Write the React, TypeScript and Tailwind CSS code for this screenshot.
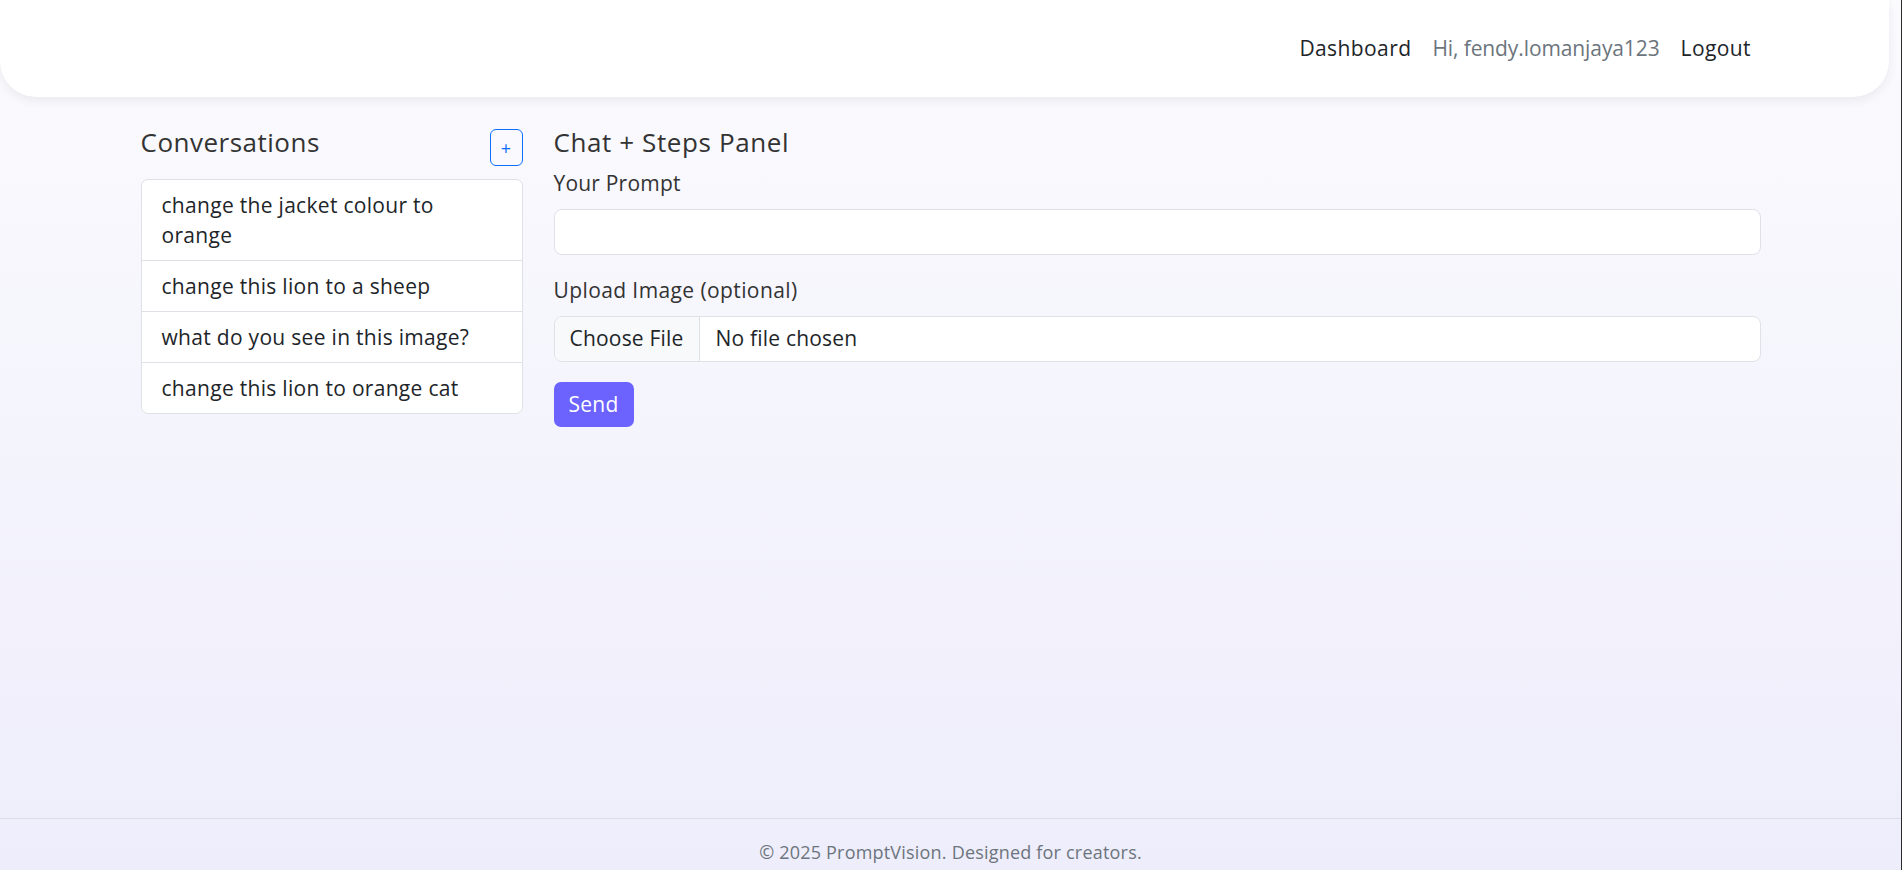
import React from 'react';

const conversations = [
  'change the jacket colour to orange',
  'change this lion to a sheep',
  'what do you see in this image?',
  'change this lion to orange cat',
];

const App: React.FC = () => {
  return (
    <div
      className="min-h-screen flex flex-col bg-gradient-to-b from-[#fbfbfe] to-[#eeedfb] text-[#212529] border-r border-r-[#2a2a2a]"
      style={{ fontFamily: '"Open Sans", "Noto Sans", sans-serif' }}
    >
      {/* Navbar */}
      <header className="h-[97px] mr-[12px] bg-white rounded-b-[36px] shadow-[0_4px_10px_rgba(30,30,60,0.07)] flex items-center justify-end pr-[138px] pb-[2px]">
        <nav className="flex items-center gap-[21px] text-[21px] leading-[30px] tracking-[0.4px]">
          <a className="text-[#212529]">Dashboard</a>
          <span className="text-[#6c757d] tracking-[-0.1px]">Hi, fendy.lomanjaya123</span>
          <a className="text-[#212529]">Logout</a>
        </nav>
      </header>

      {/* Main */}
      <main className="flex-1 w-[1620px] mx-auto flex gap-[31px] pt-[29px]">
        {/* Sidebar */}
        <aside className="w-[382px] shrink-0">
          <div className="flex justify-between items-start">
            <h5 className="text-[26px] leading-[32px] tracking-[0.5px] text-[#333]">Conversations</h5>
            <button className="mt-[3px] w-[33px] h-[37px] border border-[#0d6efd] rounded-[6px] text-[#0d6efd] text-[18px] leading-none flex items-center justify-center">
              +
            </button>
          </div>
          <ul className="mt-[13px] bg-white border border-[#dee2e6] rounded-[7px] overflow-hidden">
            {conversations.map((c, i) => (
              <li
                key={i}
                className={`px-[20px] py-[10px] text-[21px] leading-[30px] tracking-[0.3px] ${i > 0 ? 'border-t border-[#dee2e6]' : ''}`}
              >
                {c}
              </li>
            ))}
          </ul>
        </aside>

        {/* Chat panel */}
        <section className="w-[1207px]">
          <h5 className="text-[26px] leading-[32px] tracking-[0.6px] text-[#333]">Chat + Steps Panel</h5>
          <label className="block mt-[10px] text-[21px] leading-[30px] tracking-[0.2px] text-[#333]">Your Prompt</label>
          <input
            type="text"
            className="mt-[11px] w-full h-[46px] bg-white border border-[#dee2e6] rounded-[8px] px-[15px] text-[21px] outline-none"
          />
          <label className="block mt-[20px] text-[21px] leading-[30px] tracking-[0.4px] text-[#333]">Upload Image (optional)</label>
          <div className="mt-[11px] w-full h-[46px] bg-white border border-[#dee2e6] rounded-[8px] flex items-center overflow-hidden text-[21px] tracking-[0.2px]">
            <span className="h-full w-[145px] shrink-0 bg-[#f8f9fa] border-r border-[#dee2e6] flex items-center justify-center text-[#212529]">
              Choose File
            </span>
            <span className="pl-[16px] text-[#212529]">No file chosen</span>
          </div>
          <button className="mt-[20px] w-[80px] h-[45px] bg-[#6c63ff] rounded-[7px] text-white text-[21px] tracking-[0.3px]">
            Send
          </button>
        </section>
      </main>

      {/* Footer */}
      <footer className="border-t border-[#dcdbe8] pt-[21px] pb-[6px] text-center text-[18px] leading-[24px] tracking-[0.2px] text-[#6c757d]">
        © 2025 PromptVision. Designed for creators.
      </footer>
    </div>
  );
};

export default App;
